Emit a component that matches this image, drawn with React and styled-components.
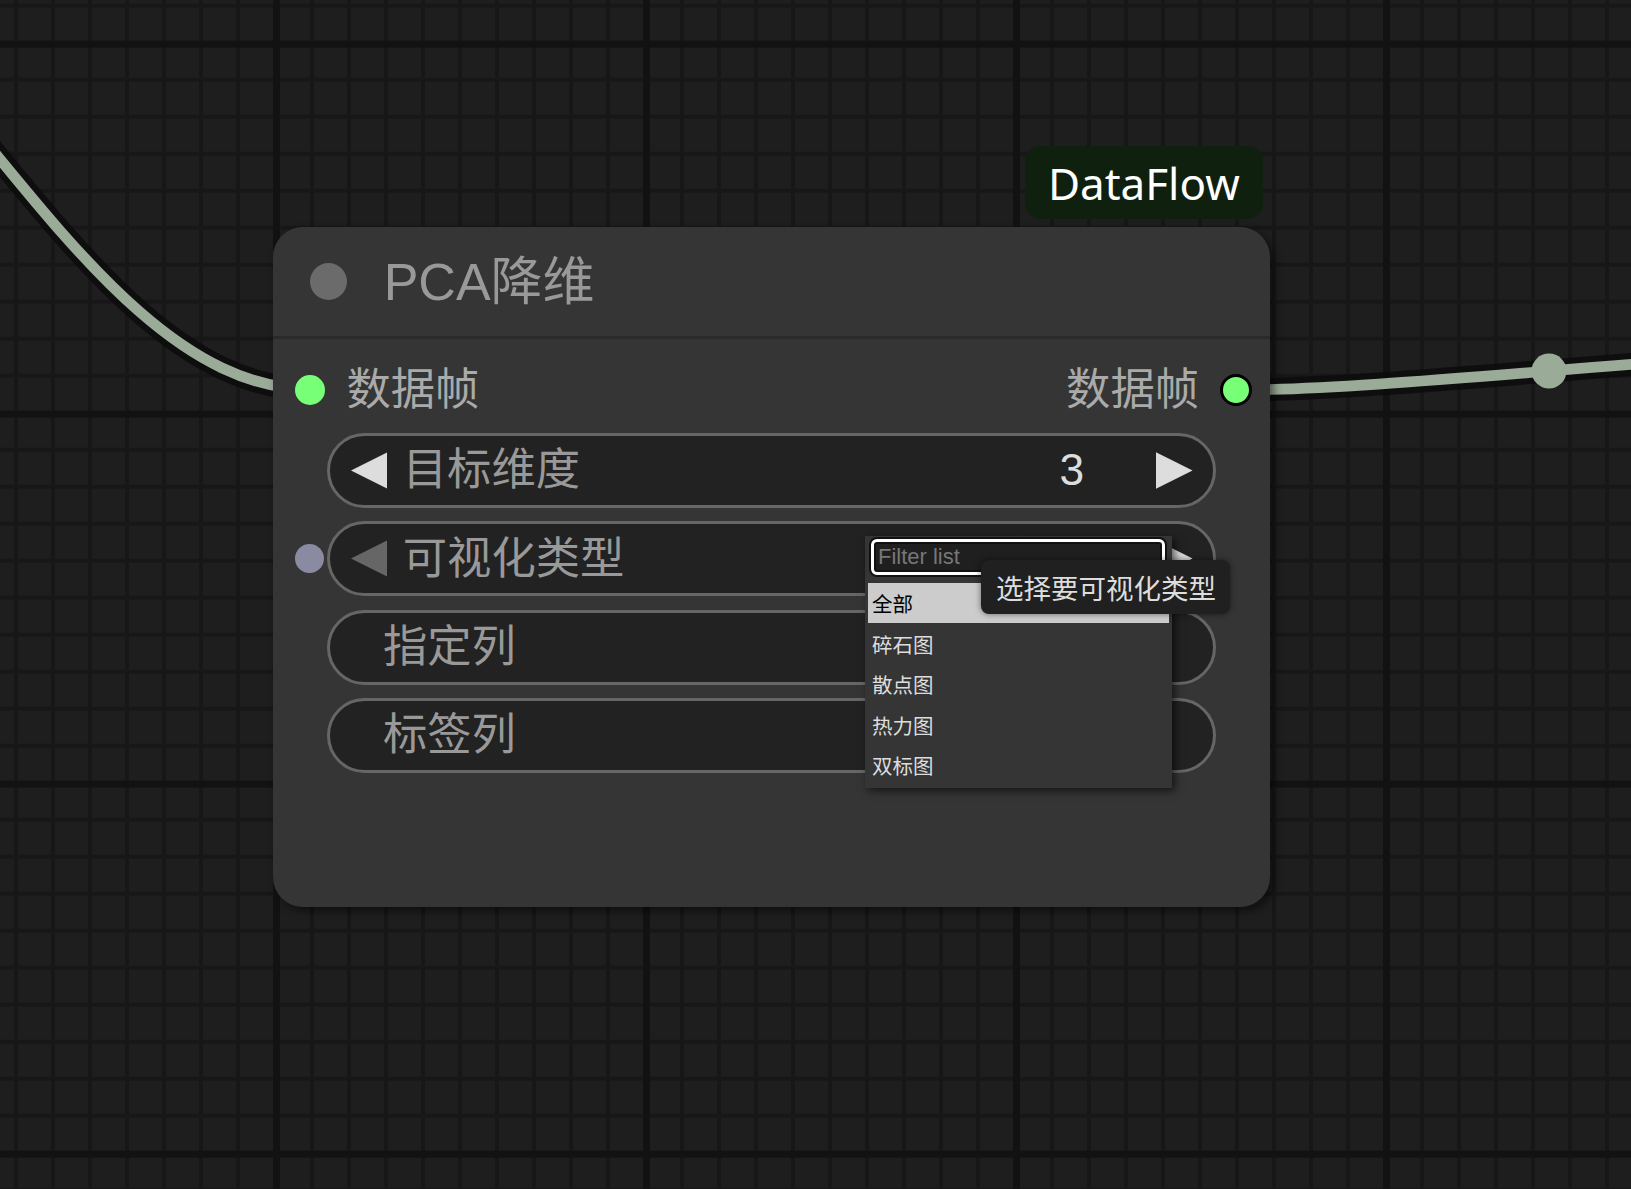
import styled, { createGlobalStyle } from 'styled-components';

const GlobalStyle = createGlobalStyle`
  html, body {
    margin: 0;
    padding: 0;
    background: #1e1e1e;
    overflow: hidden;
  }
`;

const FONT = `"Liberation Sans", "Noto Sans CJK SC", sans-serif`;

const widgets = [
    { label: '目标维度', value: '3', arrows: true },
    { label: '可视化类型', value: '全部', arrows: true, firstOption: true, slot: '#8a8aa2' },
    { label: '指定列' },
    { label: '标签列' },
];

const options = ['全部', '碎石图', '散点图', '热力图', '双标图'];

const LEFT_LINK = 'M -60 86 C 60 230, 170 389, 310 389';
const RIGHT_LINK = 'M 1237 390 C 1393 390, 1705 352, 1861 352';

function Arrow({ dir, dim }) {
    return (
        <ArrowIcon viewBox="0 0 37 37" $dim={dim}>
            {dir === 'left'
                ? <polygon points="0,18.5 37,0 37,37" />
                : <polygon points="37,18.5 0,0 0,37" />}
        </ArrowIcon>
    );
}

function App() {
    return (
        <>
            <GlobalStyle />
            <Canvas>
                <Links width="1631" height="1189">
                    <g fill="none" strokeLinecap="round">
                        <path d={LEFT_LINK} stroke="#0c0c0c" strokeOpacity="0.85" strokeWidth="23" />
                        <path d={RIGHT_LINK} stroke="#0c0c0c" strokeOpacity="0.85" strokeWidth="23" />
                        <path d={LEFT_LINK} stroke="#9aab98" strokeWidth="10.7" />
                        <path d={RIGHT_LINK} stroke="#9aab98" strokeWidth="10.7" />
                    </g>
                    <circle cx="1549" cy="371" r="17.5" fill="#9aab98" />
                </Links>

                <NodeWrap>
                    <Badge>DataFlow</Badge>
                    <Node>
                        <TitleBar>
                            <TitleDot />
                            <Title>PCA降维</Title>
                        </TitleBar>

                        <SlotRow>
                            <Slot>
                                <Dot $color="#77ff77" />
                                <SlotLabel>数据帧</SlotLabel>
                            </Slot>
                            <Slot>
                                <SlotLabel>数据帧</SlotLabel>
                                <Dot $color="#77ff77" $ring />
                            </Slot>
                        </SlotRow>

                        <WidgetList>
                            {widgets.map((w) => (
                                <WidgetRow key={w.label}>
                                    <SlotSpace>{w.slot && <Dot $color={w.slot} $small />}</SlotSpace>
                                    <Widget $arrows={w.arrows}>
                                        {w.arrows && <Arrow dir="left" dim={w.firstOption} />}
                                        <WidgetLabel>{w.label}</WidgetLabel>
                                        {w.value && <WidgetValue>{w.value}</WidgetValue>}
                                        {w.arrows && <Arrow dir="right" />}
                                    </Widget>
                                </WidgetRow>
                            ))}
                        </WidgetList>

                        <ComboMenu>
                            <FilterInput placeholder="Filter list" readOnly />
                            <MenuList>
                                {options.map((o, i) => (
                                    <MenuItem key={o} $active={i === 0}>{o}</MenuItem>
                                ))}
                            </MenuList>
                        </ComboMenu>

                        <Tooltip>选择要可视化类型</Tooltip>
                    </Node>
                </NodeWrap>
            </Canvas>
        </>
    );
}

const Canvas = styled.div`
  position: relative;
  width: 1631px;
  height: 1189px;
  overflow: hidden;
  background-color: #1e1e1e;
  background-image:
    linear-gradient(to right, #121212 6.7px, transparent 6.7px),
    linear-gradient(to bottom, #121212 6.7px, transparent 6.7px),
    linear-gradient(to right, #171717 3.7px, transparent 3.7px),
    linear-gradient(to bottom, #171717 3.7px, transparent 3.7px);
  background-size: 370px 100%, 100% 370px, 37px 100%, 100% 37px;
  background-position: 273px 0, 0 40.7px, 14px 0, 0 3.7px;
`;

const Links = styled.svg`
  position: absolute;
  inset: 0;
`;

const NodeWrap = styled.div`
  position: absolute;
  left: 272.7px;
  top: 146px;
  display: flex;
  flex-direction: column;
`;

const Badge = styled.div`
  align-self: flex-end;
  margin-right: 7.3px;
  margin-bottom: 8px;
  width: 237.7px;
  height: 73px;
  box-sizing: border-box;
  display: flex;
  align-items: center;
  justify-content: center;
  background: #10200f;
  border-radius: 15px;
  color: #fff;
  font-family: "Noto Sans", sans-serif;
  font-size: 44px;
  line-height: 1;
`;

const Node = styled.div`
  position: relative;
  width: 997.3px;
  height: 680px;
  background: #353535;
  border-radius: 30px;
  box-shadow: 4px 4px 8px rgba(0, 0, 0, 0.5);
  font-family: ${FONT};
`;

const TitleBar = styled.div`
  height: 109px;
  border-bottom: 3px solid #2a2a2a;
  display: flex;
  align-items: center;
  padding-left: 37px;
`;

const TitleDot = styled.div`
  width: 37px;
  height: 37px;
  border-radius: 50%;
  background: #6b6b6b;
`;

const Title = styled.div`
  margin-left: 37px;
  color: #999;
  font-size: 52px;
  line-height: 1;
`;

const SlotRow = styled.div`
  margin-top: 21px;
  height: 60px;
  display: flex;
  align-items: center;
  justify-content: space-between;
  padding: 0 17.5px 0 22.3px;
`;

const Slot = styled.div`
  display: flex;
  align-items: center;
  gap: 21.5px;
`;

const Dot = styled.div`
  width: ${({ $small }) => ($small ? 29 : 30)}px;
  height: ${({ $small }) => ($small ? 29 : 30)}px;
  box-sizing: border-box;
  border-radius: 50%;
  background: ${({ $color }) => $color};
  border: ${({ $ring }) => ($ring ? '3px solid #000' : 'none')};
  ${({ $ring }) => $ring && 'width: 32px; height: 32px;'}
`;

const SlotLabel = styled.span`
  color: #aaa;
  font-size: 44.3px;
  line-height: 1;
`;

const WidgetList = styled.div`
  margin-top: 13px;
  display: flex;
  flex-direction: column;
  gap: 13.3px;
`;

const WidgetRow = styled.div`
  display: flex;
  align-items: center;
  padding-right: 54px;
`;

const SlotSpace = styled.div`
  width: 54px;
  flex: none;
  display: flex;
  padding-left: 22.8px;
  box-sizing: border-box;
`;

const Widget = styled.div`
  flex: 1;
  height: 75px;
  box-sizing: border-box;
  border: 3px solid #666;
  border-radius: 38px;
  background: #222;
  display: flex;
  align-items: center;
  padding: 0 20.3px 0 ${({ $arrows }) => ($arrows ? 21 : 53.3)}px;
`;

const ArrowIcon = styled.svg`
  width: 36.6px;
  height: 37px;
  flex: none;
  fill: ${({ $dim }) => ($dim ? '#666' : '#ddd')};
`;

const WidgetLabel = styled.span`
  flex: 1;
  color: #999;
  font-size: 44.3px;
  line-height: 1;
  svg + & {
    margin-left: 15.5px;
  }
`;

const WidgetValue = styled.span`
  color: #ddd;
  font-size: 44.3px;
  line-height: 1;
  margin-right: 72px;
`;

const ComboMenu = styled.div`
  position: absolute;
  left: 592.3px;
  top: 309px;
  width: 306.7px;
  height: 251.7px;
  box-sizing: border-box;
  padding: 3px 3px 0 3px;
  background: #353535;
  box-shadow: 3px 3px 8px rgba(0, 0, 0, 0.6);
  display: flex;
  flex-direction: column;
`;

const FilterInput = styled.input`
  margin: 0 3.7px 0 3px;
  height: 35.7px;
  box-sizing: border-box;
  border: 3px solid #fff;
  border-radius: 6px;
  box-shadow: 0 0 0 2px #111, inset 0 0 0 2px #111;
  background: #1f1f1f;
  padding: 0 4px;
  font-family: "Liberation Sans", sans-serif;
  font-size: 22px;
  color: #ddd;
  outline: none;
  &::placeholder {
    color: #777;
  }
`;

const MenuList = styled.div`
  margin-top: 8.3px;
  display: flex;
  flex-direction: column;
`;

const MenuItem = styled.div`
  height: 40.5px;
  display: flex;
  align-items: center;
  padding-left: 4px;
  font-family: "Noto Sans CJK SC", sans-serif;
  font-size: 20.5px;
  color: ${({ $active }) => ($active ? '#000' : '#ddd')};
  background: ${({ $active }) => ($active ? '#ccc' : 'transparent')};
`;

const Tooltip = styled.div`
  position: absolute;
  left: 708.3px;
  top: 333px;
  height: 54px;
  box-sizing: border-box;
  padding: 0 14px 0 15px;
  display: flex;
  align-items: center;
  background: #202020;
  border-radius: 8px;
  box-shadow: 0 0 6px rgba(0, 0, 0, 0.5);
  color: #ddd;
  font-family: "Noto Sans CJK SC", sans-serif;
  font-size: 27.5px;
  white-space: nowrap;
`;

export default App;
